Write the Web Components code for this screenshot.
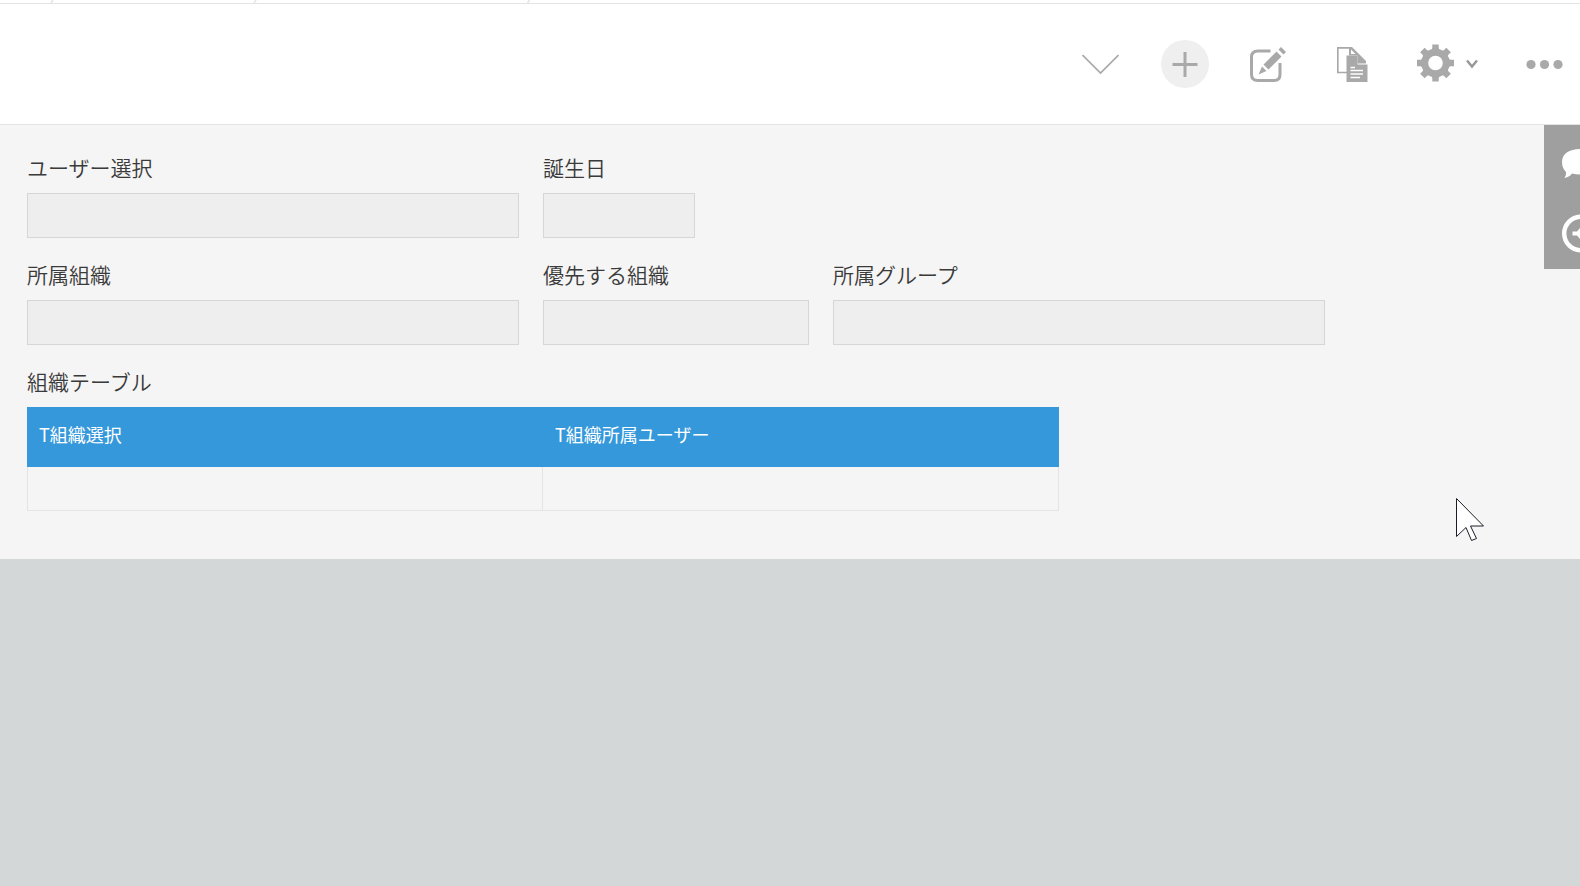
<!DOCTYPE html>
<html lang="ja">
<head>
<meta charset="UTF-8">
<title>ユーザー選択</title>
<style>
    body {
        margin: 0;
        height: 100vh;
        overflow: hidden;
        background: #d3d7d7;
        color: #3a3a3a;
        font-family: "Noto Sans CJK JP", sans-serif;
    }
</style>
</head>
<body>
<app-page>
    <crumb-bar slot="top"></crumb-bar>
    <tool-bar slot="top"></tool-bar>
    <field-row>
        <form-field label="ユーザー選択" width="492"></form-field>
        <form-field label="誕生日" width="152"></form-field>
    </field-row>
    <field-row>
        <form-field label="所属組織" width="492"></form-field>
        <form-field label="優先する組織" width="266"></form-field>
        <form-field label="所属グループ" width="492"></form-field>
    </field-row>
    <sub-table label="組織テーブル">
        <span slot="first">T組織選択</span>
        <span slot="second">T組織所属ユーザー</span>
    </sub-table>
    <side-panel slot="side"></side-panel>
    <mouse-pointer slot="over"></mouse-pointer>
</app-page>

<script>
class AppPage extends HTMLElement{
    constructor(){
        super();
        this.attachShadow({mode: 'open'});
        this.shadowRoot.innerHTML = `
            <style>
                :host {
                    display: block;
                    position: relative;
                }

                main {
                    display: flex;
                    justify-content: space-between;
                    align-items: flex-start;
                    height: 434px;
                    background: #f5f5f5;
                }

                #record {
                    padding: 28px 0 0 27px;
                }
            </style>
            <slot name="top"></slot>
            <main>
                <div id="record"><slot></slot></div>
                <slot name="side"></slot>
            </main>
            <slot name="over"></slot>
        `
    }
}

class CrumbBar extends HTMLElement{
    constructor(){
        super();
        this.attachShadow({mode: 'open'});
        this.shadowRoot.innerHTML = `
            <style>
                :host {
                    display: block;
                    height: 3px;
                    background: white;
                    border-bottom: 1px solid #e3e5e5;
                }

                svg {
                    display: block;
                }
            </style>
            <svg width="1580" height="3" fill="none" stroke="#e3e7e7" stroke-width="1.6">
                <path d="M53 0L51 3M256 0L254 3M529.500 0L527.500 3"/>
            </svg>
        `
    }
}

class ToolBar extends HTMLElement{
    constructor(){
        super();
        this.attachShadow({mode: 'open'});
        this.shadowRoot.innerHTML = `
            <style>
                :host {
                    display: flex;
                    justify-content: flex-end;
                    align-items: center;
                    height: 120px;
                    padding-right: 17.5px;
                    background: white;
                    border-bottom: 1px solid #e3e3e3;
                    color: #a9a9a9;
                }

                svg {
                    display: block;
                }

                #menu { margin-right: 42px; }
                #add { margin-right: 40px; }
                #edit { margin-right: 51px; }
                #copy { margin-right: 49px; }
                #gear { margin-right: 12px; }
                #more-settings { margin-right: 47.5px; }
            </style>
            <svg id="menu" width="37" height="48" fill="none" stroke="currentColor" stroke-width="1.7">
                <path d="M.5 15L18.500 33L36.500 15"/>
            </svg>
            <svg id="add" width="48" height="48">
                <circle cx="24" cy="24" r="24" fill="#efefef"/>
                <path d="M11.500 24.500H36.500M24 12V37" stroke="currentColor" stroke-width="3"/>
            </svg>
            <svg id="edit" width="37" height="48" fill="currentColor">
                <path d="M21.500 11H9Q2.500 11 2.500 17V34.500Q2.500 40.500 9 40.500H25Q31 40.500 31 34.500V23" fill="none" stroke="currentColor" stroke-width="3"/>
                <path d="M27.500 11.500L32.500 16.500L19.500 29.500L14.500 24.500ZM29.500 9.500L32 7L37 12L34.500 14.500ZM13 26.500L17.500 31L9.500 34.500Z"/>
            </svg>
            <svg id="copy" width="31" height="48" fill="currentColor">
                <path d="M14.500 7.800H.8V32.500H10" fill="none" stroke="currentColor" stroke-width="1.7"/>
                <path d="M12 7H15L29 21V23.500H20.500V15.500H12ZM14 9.500V14H18.500Z" fill-rule="evenodd"/>
                <path d="M9.500 15.500H20.500V24.500H30.500V42H9.500Z"/>
                <path d="M13.500 27.500H18M13.500 30.500H26M13.500 34H26M13.500 37.500H23" stroke="white" stroke-width="1.500"/>
            </svg>
            <svg id="gear" width="37" height="48" viewBox="-18.500 -23 37 48">
                <g id="teeth" fill="currentColor"></g>
                <circle r="10.800" fill="none" stroke="currentColor" stroke-width="7"/>
            </svg>
            <svg id="more-settings" width="12" height="48" fill="none" stroke="#999" stroke-width="2.500">
                <path d="M1 20.500L6 26.500L11 20.500"/>
            </svg>
            <svg id="dots" width="37" height="48" fill="currentColor">
                <circle cx="5" cy="24.500" r="4.600"/>
                <circle cx="18.500" cy="24.500" r="4.600"/>
                <circle cx="32" cy="24.500" r="4.600"/>
            </svg>
        `
        // eight teeth, one every 45 degrees
        let teeth = '';
        for(let angle = 0; angle < 360; angle += 45){
            teeth += `<path d="M-5 -11L-3.200 -15V-18.500H3.200V-15L5 -11Z" transform="rotate(${angle})"/>`;
        }
        this.shadowRoot.querySelector('#teeth').innerHTML = teeth;
    }
}

class FieldRow extends HTMLElement{
    constructor(){
        super();
        this.attachShadow({mode: 'open'});
        this.shadowRoot.innerHTML = `
            <style>
                :host {
                    display: flex;
                    gap: 24px;
                    margin-bottom: 22px;
                }
            </style>
            <slot></slot>
        `
    }
}

class FormField extends HTMLElement{
    constructor(){
        super();
        this.attachShadow({mode: 'open'});
        this.shadowRoot.innerHTML = `
            <style>
                :host {
                    display: block;
                }

                label {
                    display: block;
                    height: 40px;
                    font-size: 21px;
                    font-weight: 350;
                    line-height: 28px;
                }

                #value {
                    box-sizing: border-box;
                    height: 45px;
                    background: #eee;
                    border: 1px solid #d5d7d7;
                }
            </style>
            <label></label>
            <div id="value"></div>
        `
    }

    connectedCallback(){
        this.shadowRoot.querySelector('label').textContent = this.getAttribute('label');
        this.shadowRoot.querySelector('#value').style.width = this.getAttribute('width') + 'px';
    }
}

class SubTable extends HTMLElement{
    constructor(){
        super();
        this.attachShadow({mode: 'open'});
        this.shadowRoot.innerHTML = `
            <style>
                :host {
                    display: block;
                    width: 1032px;
                }

                h2 {
                    height: 40px;
                    margin: 0;
                    font-size: 21px;
                    font-weight: 350;
                    line-height: 28px;
                }

                #head, #row {
                    display: grid;
                    grid-template-columns: 516px 516px;
                }

                #head {
                    height: 60px;
                    background: #3598db;
                    color: white;
                    font-size: 18px;
                    line-height: 55px;
                }

                #head div {
                    padding-left: 12px;
                }

                #row {
                    box-sizing: border-box;
                    grid-template-columns: 515px 1fr;
                    height: 44px;
                    border: 1px solid #e3e5e5;
                    border-top: none;
                }

                #row div:first-child {
                    box-sizing: border-box;
                    border-right: 1px solid #e3e5e5;
                }
            </style>
            <h2></h2>
            <div id="head">
                <div><slot name="first"></slot></div>
                <div><slot name="second"></slot></div>
            </div>
            <div id="row"><div></div><div></div></div>
        `
    }

    connectedCallback(){
        this.shadowRoot.querySelector('h2').textContent = this.getAttribute('label');
    }
}

class SidePanel extends HTMLElement{
    constructor(){
        super();
        this.attachShadow({mode: 'open'});
        this.shadowRoot.innerHTML = `
            <style>
                :host {
                    display: block;
                    width: 36px;
                    height: 144px;
                    background: #9f9f9f;
                }

                svg {
                    display: block;
                }
            </style>
            <svg width="36" height="144" fill="white">
                <path d="M36 24C25 24 18 29 18 37C18 42 20 45 22 47Q22.500 50 20.500 53Q26 51.500 28 48.500Q32 49.500 36 49.500Z"/>
                <circle cx="37" cy="108.500" r="16.800" fill="none" stroke="white" stroke-width="4.400"/>
                <path d="M28.500 106.500H33L36 103V114L33 110.500H28.500Z"/>
            </svg>
        `
    }
}

class MousePointer extends HTMLElement{
    constructor(){
        super();
        this.attachShadow({mode: 'open'});
        this.shadowRoot.innerHTML = `
            <style>
                :host {
                    position: absolute;
                    left: 1455px;
                    top: 497px;
                }
            </style>
            <svg width="31" height="45" fill="white" stroke="#1c1c28" stroke-width="1">
                <path d="M1.500 1.500V39.500L11 30.500L16.500 43.500L21.500 41.500L15.500 29H28.500Z"/>
            </svg>
        `
    }
}

customElements.define("app-page", AppPage);
customElements.define("crumb-bar", CrumbBar);
customElements.define("tool-bar", ToolBar);
customElements.define("field-row", FieldRow);
customElements.define("form-field", FormField);
customElements.define("sub-table", SubTable);
customElements.define("side-panel", SidePanel);
customElements.define("mouse-pointer", MousePointer);
</script>
</body>
</html>
